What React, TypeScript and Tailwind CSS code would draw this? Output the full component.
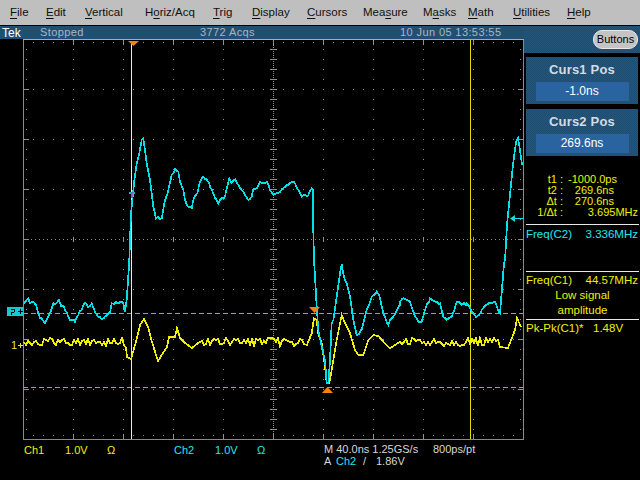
import React from "react";

type P = [number, number];
const z = (ox: number, oy: number, a: P[]): P[] => a.map(([x, y]) => [ox + x / 3, oy + y / 3]);

let seed = 7;
const rnd = () => {
  seed = (seed * 1103515245 + 12345) & 0x7fffffff;
  return seed / 0x7fffffff;
};
const noisy = (x0: number, x1: number, y: number, amp: number): P[] => {
  const out: P[] = [];
  for (let x = x0; x <= x1; x += 2) out.push([x, Math.round(y + (rnd() - 0.5) * amp * 2)]);
  return out;
};
// Subdivide gentle parts of a trace and roughen them, like a sampled signal.
const roughen = (a: P[], amp: number): P[] => {
  const out: P[] = [];
  for (let i = 0; i < a.length - 1; i++) {
    const [x0, y0] = a[i];
    const [x1, y1] = a[i + 1];
    const dx = x1 - x0;
    out.push([x0, y0]);
    if (dx < 1 || Math.abs(y1 - y0) / dx > 3) continue;
    for (let x = x0 + 2; x < x1; x += 2) {
      const y = y0 + ((y1 - y0) * (x - x0)) / dx;
      out.push([Math.round(x), Math.round(y + (rnd() - 0.5) * amp * 2)]);
    }
  }
  out.push(a[a.length - 1]);
  return out;
};

const cyan: P[] = roughen([
  ...z(0, 260, [[72,130],[80,120],[85,115],[90,130],[100,125],[108,135],[115,160],[125,175],[135,190],[145,170],[152,155],[160,130],[170,128],[178,122],[185,135],[195,150],[205,170],[215,180],[225,185],[235,165],[245,150],[250,135],[258,130],[265,140],[275,130],[285,155],[295,170],[305,178],[315,170],[330,160],[335,130],[350,130],[360,125],[370,130],[375,155],[380,120],[385,50],[388,0]]),
  ...z(120, 120, [[33,280],[38,230],[43,180],[50,130],[58,100],[65,60],[70,55],[75,90],[80,130],[90,180],[95,220],[100,260],[108,295],[125,295],[135,240],[145,210],[155,165],[165,147],[175,155],[180,185],[190,210],[195,240],[205,260],[215,265],[220,240],[232,220],[240,185],[250,170],[260,178],[270,200],[280,220],[290,240],[295,250],[305,235],[315,230],[320,205],[328,175],[335,188],[345,178],[355,195],[365,210],[375,225],[385,240],[395,230],[400,207],[410,205],[420,185],[430,190],[440,185],[450,210],[460,225],[475,220],[490,205],[505,195],[515,185],[525,190],[535,210],[545,230],[555,225],[565,225],[575,205],[580,210],[580,330]]),
  ...z(290, 260, [[72,0],[75,50],[80,140],[85,210],[95,260],[105,300],[110,370],[115,370],[120,300],[125,190],[130,180],[140,110],[150,40],[155,12],[160,40],[170,70],[180,110],[190,180],[200,225],[215,210],[230,150],[245,110],[260,95],[270,115],[280,160],[295,195],[310,170],[330,135]]),
  ...z(400, 260, [[0,125],[10,115],[30,125],[40,155],[55,185],[65,185],[75,150],[90,115],[105,125],[120,130],[130,170],[140,180],[155,170],[170,125],[185,135],[200,130],[215,155],[230,170],[245,150],[265,130],[285,125],[300,160],[308,60],[312,10],[315,0]]),
  [507, 225], [510, 195], [513, 165], [516, 142], [518, 138], [520, 150], [522, 165],
], 1.2);

const yellow: P[] = [
  ...noisy(24, 124, 342, 4),
  [126,348],[127,357],[131,359],[133,352],[137,338],[140,325],[144,319],[148,327],[152,342],[157,358],[158,361],[163,353],[167,347],[169,337],[175,337],[177,328],[180,338],[185,343],[192,348],[198,343],
  ...noisy(200, 304, 342, 4),
  [307,345],
  ...z(290, 260, [[65,220],[72,175],[80,180],[85,220],[95,250],[105,320],[110,370],[118,370],[125,330],[140,240],[155,165],[165,190],[180,220],[195,270],[205,285],[220,285],[235,240],[250,225],[265,228],[285,250],[300,265],[330,245]]),
  ...noisy(402, 498, 342, 4),
  [500,347],[508,348],[515,330],[517,318],[521,327],
];

const line = (a: P[]) => a.map(([x, y]) => `${x.toFixed(1)},${y.toFixed(1)}`).join(" ");

function Grid() {
  const dots: React.ReactElement[] = [];
  const c = "#909090";
  const d = (x: number, y: number, w = 1, h = 1, k = `${x}-${y}-${w}`) =>
    dots.push(<rect key={k} x={x} y={y} width={w} height={h} fill={c} />);
  for (let r = 1; r < 8; r++) {
    const y = 39 + r * 50;
    if (r === 4) continue;
    for (let x = 33; x < 523; x += 10) d(x, y);
  }
  for (let col = 1; col < 10; col++) {
    const x = 23 + col * 50;
    if (col === 5) continue;
    for (let y = 49; y < 439; y += 10) d(x, y);
  }
  for (let x = 27; x < 523; x += 4) d(x, 239);
  for (let y = 41; y < 439; y += 2) d(273, y);
  for (let y = 49; y < 439; y += 10) d(270, y, 7, 1, `ct${y}`);
  for (let x = 33; x < 523; x += 10) {
    d(x, 42, 1, 1, `t${x}`);
    d(x, 435, 1, 1, `b${x}`);
    if ((x - 23) % 50 === 0) {
      d(x, 40, 1, 5, `tt${x}`);
      d(x, 434, 1, 5, `bb${x}`);
      d(x, 237, 1, 5, `mm${x}`);
    }
  }
  for (let y = 49; y < 439; y += 10) {
    d(26, y, 1, 1, `l${y}`);
    d(520, y, 1, 1, `r${y}`);
    if ((y - 39) % 50 === 0) {
      d(24, y, 5, 1, `ll${y}`);
      d(518, y, 5, 1, `rr${y}`);
    }
  }
  return <g shapeRendering="crispEdges">{dots}</g>;
}

function Scope() {
  return (
    <svg width="524" height="401" viewBox="0 39 524 401" className="block">
      <Grid />
      <g shapeRendering="crispEdges">
        <line x1="23.5" y1="39" x2="23.5" y2="440" stroke="#8c8c80" />
        <line x1="523.5" y1="39" x2="523.5" y2="440" stroke="#8c8c80" />
        <line x1="23" y1="39.5" x2="524" y2="39.5" stroke="#a8b878" />
        <line x1="23" y1="439.5" x2="524" y2="439.5" stroke="#8c8c80" />
        <line x1="23" y1="313.5" x2="523" y2="313.5" stroke="#f08a1c" strokeDasharray="5 3" />
        <line x1="23" y1="387.5" x2="523" y2="387.5" stroke="#f08a1c" strokeDasharray="5 3" />
        <line x1="131.5" y1="42" x2="131.5" y2="439" stroke="#f2f2a8" />
        <line x1="470.5" y1="40" x2="470.5" y2="439" stroke="#e0e000" />
      </g>
      <polyline points={line(yellow)} fill="none" stroke="#f0f000" strokeWidth="1.7" shapeRendering="crispEdges" />
      <polyline points={line(cyan)} fill="none" stroke="#00e0e8" strokeWidth="1.7" shapeRendering="crispEdges" />
      <g shapeRendering="crispEdges">
        <rect x="129" y="192" width="6" height="2" fill="#18b8c0" />
        <rect x="131" y="192" width="2" height="6" fill="#8060c0" />
      </g>
      <polygon points="128,41 139,41 133.5,46" fill="#f5820f" />
      <polygon points="309,307 320,307 314.5,313" fill="#f5820f" />
      <polygon points="322,393 333,393 327.5,387" fill="#f5820f" />
      <g shapeRendering="crispEdges">
        <rect x="7" y="307" width="16" height="9" fill="#18c8cc" />
        <rect x="18" y="311" width="5" height="1" fill="#000" />
        <rect x="20" y="309" width="1" height="5" fill="#000" />
        <rect x="11" y="309" width="4" height="1" fill="#000" />
        <rect x="14" y="310" width="1" height="2" fill="#000" />
        <rect x="11" y="312" width="3" height="1" fill="#000" />
        <rect x="11" y="313" width="1" height="2" fill="#000" />
        <rect x="18" y="345" width="5" height="1" fill="#e8e840" />
        <rect x="20" y="343" width="1" height="5" fill="#e8e840" />
        <rect x="511" y="218" width="13" height="1" fill="#18d8e0" />
      </g>
      <polygon points="510,218.5 515,215 515,222" fill="#18d8e0" />
      <text x="11" y="349" fontSize="11" fill="#e8e840" fontFamily="Liberation Sans, sans-serif">1</text>
    </svg>
  );
}

const Mn = ({ pre = "", u, post = "" }: { pre?: string; u: string; post?: string }) => (
  <span>
    {pre}
    <span className="underline underline-offset-2">{u}</span>
    {post}
  </span>
);

function CursorPanel({ title, value }: { title: string; value: string }) {
  return (
    <div className="h-[47px] w-[112px] bg-[repeating-conic-gradient(#1f4d70_0_25%,#24557a_0_50%)] bg-[length:2px_2px] flex flex-col items-center pt-[3px]">
      <div className="h-[19px] text-[13px] leading-[19px] font-bold tracking-[0.2px] text-[#d4dce4]">{title}</div>
      <div className="mt-[3px] w-[93px] h-[19px] bg-[#2a64a0] text-center text-[12px] leading-[19px] text-white">{value}</div>
    </div>
  );
}

const Rule = () => <div className="h-px bg-[#e8e8e8] w-[113px]" />;

const CursRow = ({ label, value, right }: { label: string; value: string; right: string }) => (
  <div className={`flex h-[11px] leading-[11px] text-[#f0f000] ${right}`}>
    <div className="w-[37px] text-right shrink-0">{label}</div>
    <div className="ml-[5px] flex-1 text-right">{value}</div>
  </div>
);

export default function App() {
  return (
    <div className="w-[640px] h-[480px] bg-black overflow-hidden flex flex-col font-['Liberation_Sans',sans-serif] text-[11px]">
      <div className="h-[25px] bg-[#bfbfbf] flex items-center pl-[10px] text-[11.5px] text-[#101010] shrink-0">
        <div className="w-[36px]"><Mn u="F" post="ile" /></div>
        <div className="w-[39px]"><Mn u="E" post="dit" /></div>
        <div className="w-[60px]"><Mn u="V" post="ertical" /></div>
        <div className="w-[68px]"><Mn pre="H" u="o" post="riz/Acq" /></div>
        <div className="w-[39px]"><Mn u="T" post="rig" /></div>
        <div className="w-[55px]"><Mn u="D" post="isplay" /></div>
        <div className="w-[56px]"><Mn u="C" post="ursors" /></div>
        <div className="w-[60px]"><Mn pre="Mea" u="s" post="ure" /></div>
        <div className="w-[45px]"><Mn pre="M" u="a" post="sks" /></div>
        <div className="w-[45px]"><Mn u="M" post="ath" /></div>
        <div className="w-[54px]"><Mn u="U" post="tilities" /></div>
        <div><Mn u="H" post="elp" /></div>
      </div>
      <div className="h-px bg-black shrink-0" />
      <div className="flex flex-1 min-h-0">
        <div className="w-[524px] flex flex-col shrink-0">
          <div className="h-[13px] bg-[#1f4f72] flex items-center text-[11px] text-[#a8b8c4] tracking-[0.4px]">
            <div className="w-[40px] pl-[2px] text-white text-[12px] tracking-normal">Tek</div>
            <div className="w-[160px]">Stopped</div>
            <div className="w-[200px]">3772 Acqs</div>
            <div className="flex-1">10 Jun 05 13:53:55</div>
          </div>
          <Scope />
          <div className="mt-[2px] flex">
            <div className="w-[324px] flex">
              <div className="ml-[24px] w-[150px] flex text-[#f0f000]">
                <span className="w-[41px]">Ch1</span>
                <span className="w-[42px]">1.0V</span>
                <span>Ω</span>
              </div>
              <div className="flex text-[#20e8f0]">
                <span className="w-[41px]">Ch2</span>
                <span className="w-[42px]">1.0V</span>
                <span>Ω</span>
              </div>
            </div>
            <div className="text-[#d8d8d8] leading-[12px] mt-[1px]">
              <div className="flex">
                <span className="w-[109px]">M 40.0ns 1.25GS/s</span>
                <span>800ps/pt</span>
              </div>
              <div className="flex">
                <span className="w-[12px]">A</span>
                <span className="w-[27px] text-[#20e8f0]">Ch2</span>
                <span className="w-[13px]">/</span>
                <span>1.86V</span>
              </div>
            </div>
          </div>
        </div>
        <div className="w-[116px] flex flex-col shrink-0 text-[#f0f000]">
          <div className="h-[27px] bg-[repeating-conic-gradient(#1f4d70_0_25%,#24557a_0_50%)] bg-[length:2px_2px] flex items-center justify-end pr-[2px]">
            <button className="w-[45px] h-[19px] rounded-[9px] bg-[#c4c4c4] border border-[#e8e8e8] text-[11px] text-black flex items-center justify-center">
              Buttons
            </button>
          </div>
          <div className="mt-[4px] ml-[2px] flex flex-col gap-[5px]">
            <CursorPanel title="Curs1 Pos" value="-1.0ns" />
            <CursorPanel title="Curs2 Pos" value="269.6ns" />
          </div>
          <div className="mt-[18px] ml-[2px] w-[113px]">
            <CursRow label="t1 :" value="-1000.0ps" right="pr-[25px]" />
            <CursRow label="t2 :" value="269.6ns" right="pr-[25px]" />
            <CursRow label="Δt :" value="270.6ns" right="pr-[25px]" />
            <CursRow label="1/Δt :" value="3.695MHz" right="pr-[1px]" />
          </div>
          <div className="mt-[6px] ml-[2px] w-[113px] flex flex-col text-[11.5px]">
            <Rule />
            <div className="mt-[3px] h-[13px] leading-[13px] flex justify-between pr-[1px] text-[#20e8f0]">
              <span>Freq(C2)</span>
              <span>3.336MHz</span>
            </div>
            <div className="mt-[30px]"><Rule /></div>
            <div className="mt-[2px] h-[13px] leading-[13px] flex justify-between pr-[1px]">
              <span>Freq(C1)</span>
              <span>44.57MHz</span>
            </div>
            <div className="text-center h-[15px] leading-[15px] mt-[1px]">Low signal</div>
            <div className="text-center h-[15px] leading-[15px]">amplitude</div>
            <div className="mt-[1px]"><Rule /></div>
            <div className="mt-[2px] h-[13px] leading-[13px] flex">
              <span className="w-[67px]">Pk-Pk(C1)*</span>
              <span>1.48V</span>
            </div>
          </div>
        </div>
      </div>
    </div>
  );
}
